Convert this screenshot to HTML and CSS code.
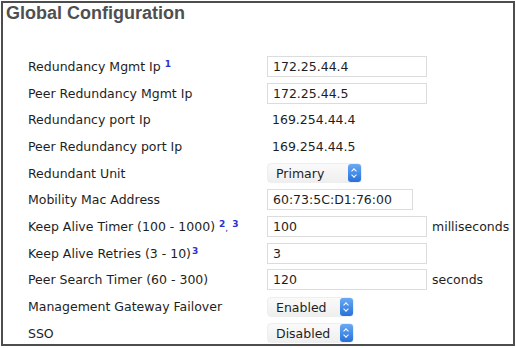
FILE: index.html
```html
<!DOCTYPE html>
<html lang="en">
<head>
  <meta charset="UTF-8">
  <title>Global Configuration</title>
  <link rel="stylesheet" href="styles.css">
</head>
<body>

  <div class="panel">
    <h2>Global Configuration</h2>

    <div class="form">
      <label>Redundancy Mgmt Ip <a class="note">1</a></label>
      <div class="field"><input type="text" value="172.25.44.4"></div>

      <label>Peer Redundancy Mgmt Ip</label>
      <div class="field"><input type="text" value="172.25.44.5"></div>

      <label>Redundancy port Ip</label>
      <div class="field"><span class="value">169.254.44.4</span></div>

      <label>Peer Redundancy port Ip</label>
      <div class="field"><span class="value">169.254.44.5</span></div>

      <label>Redundant Unit</label>
      <div class="field"><div class="select wide">Primary<span class="arrows"></span></div></div>

      <label>Mobility Mac Address</label>
      <div class="field"><input type="text" class="mac" value="60:73:5C:D1:76:00"></div>

      <label>Keep Alive Timer (100 - 1000)<a class="note">2</a><span class="comma">,</span> <a class="note">3</a></label>
      <div class="field"><input type="text" value="100"><span class="unit">milliseconds</span></div>

      <label>Keep Alive Retries (3 - 10)<a class="note tight">3</a></label>
      <div class="field"><input type="text" value="3"></div>

      <label>Peer Search Timer (60 - 300)</label>
      <div class="field"><input type="text" value="120"><span class="unit">seconds</span></div>

      <label>Management Gateway Failover</label>
      <div class="field"><div class="select">Enabled<span class="arrows"></span></div></div>

      <label>SSO</label>
      <div class="field"><div class="select">Disabled<span class="arrows"></span></div></div>
    </div>
  </div>

</body>
</html>
```

FILE: styles.css
```css
body {
  margin: 0;
  background: #fff;
  font-family: "DejaVu Sans", Verdana, sans-serif;
}
.panel {
  box-sizing: border-box;
  width: 514px;
  height: 345px;
  margin: 1px 0 0 1px;
  border: 2px solid #4d4d4d;
  background: #fff;
}
h2 {
  margin: 0;
  height: 50px;
  padding: 0 0 0 3px;
  box-sizing: border-box;
  font-family: "Liberation Sans", Arial, sans-serif;
  font-size: 18px;
  font-weight: bold;
  color: #4f4f4f;
}
.form {
  display: grid;
  grid-template-columns: 239px 1fr;
  grid-auto-rows: 26.7px;
  padding-left: 25px;
}
label {
  display: flex;
  align-items: center;
  font-size: 12.5px;
  color: #1e1e1e;
  white-space: nowrap;
}
.note {
  margin-left: 4px;
  font-size: 9px;
  font-weight: bold;
  color: #2f2fd0;
  align-self: flex-start;
  margin-top: 6px;
}
.note.tight {
  margin-left: 1px;
}
.comma {
  font-size: 9px;
  color: #2f2fd0;
  margin-top: 4px;
}
.field {
  display: flex;
  align-items: center;
}
input {
  box-sizing: border-box;
  width: 160px;
  height: 21px;
  padding: 0 5px;
  border: 1px solid #dcdcdc;
  border-radius: 0;
  font-family: "DejaVu Sans", Verdana, sans-serif;
  font-size: 12.5px;
  color: #1e1e1e;
  background: #fff;
}
input.mac {
  width: 146px;
}
.value {
  padding-left: 5px;
  font-size: 12.5px;
  color: #1e1e1e;
}
.unit {
  margin-left: 5px;
  font-size: 12.5px;
  color: #1e1e1e;
}
.select {
  position: relative;
  box-sizing: border-box;
  width: 87px;
  height: 20px;
  padding: 2px 0 0 8px;
  border-radius: 4px;
  background: linear-gradient(#fafafa, #efefef);
  border: 1px solid #eeeeee;
  font-size: 12.5px;
  color: #1e1e1e;
}
.select.wide {
  width: 95px;
}
.arrows {
  position: absolute;
  right: 0;
  top: 0;
  width: 13px;
  height: 18px;
  border-radius: 3px;
  background: linear-gradient(#6aaaf2, #2670dc);
}
.arrows::before,
.arrows::after {
  content: "";
  position: absolute;
  left: 4px;
  width: 3px;
  height: 3px;
  border: solid #fff;
  border-width: 1.5px 0 0 1.5px;
}
.arrows::before {
  top: 5px;
  transform: rotate(45deg);
}
.arrows::after {
  top: 9px;
  transform: rotate(225deg);
}
```
